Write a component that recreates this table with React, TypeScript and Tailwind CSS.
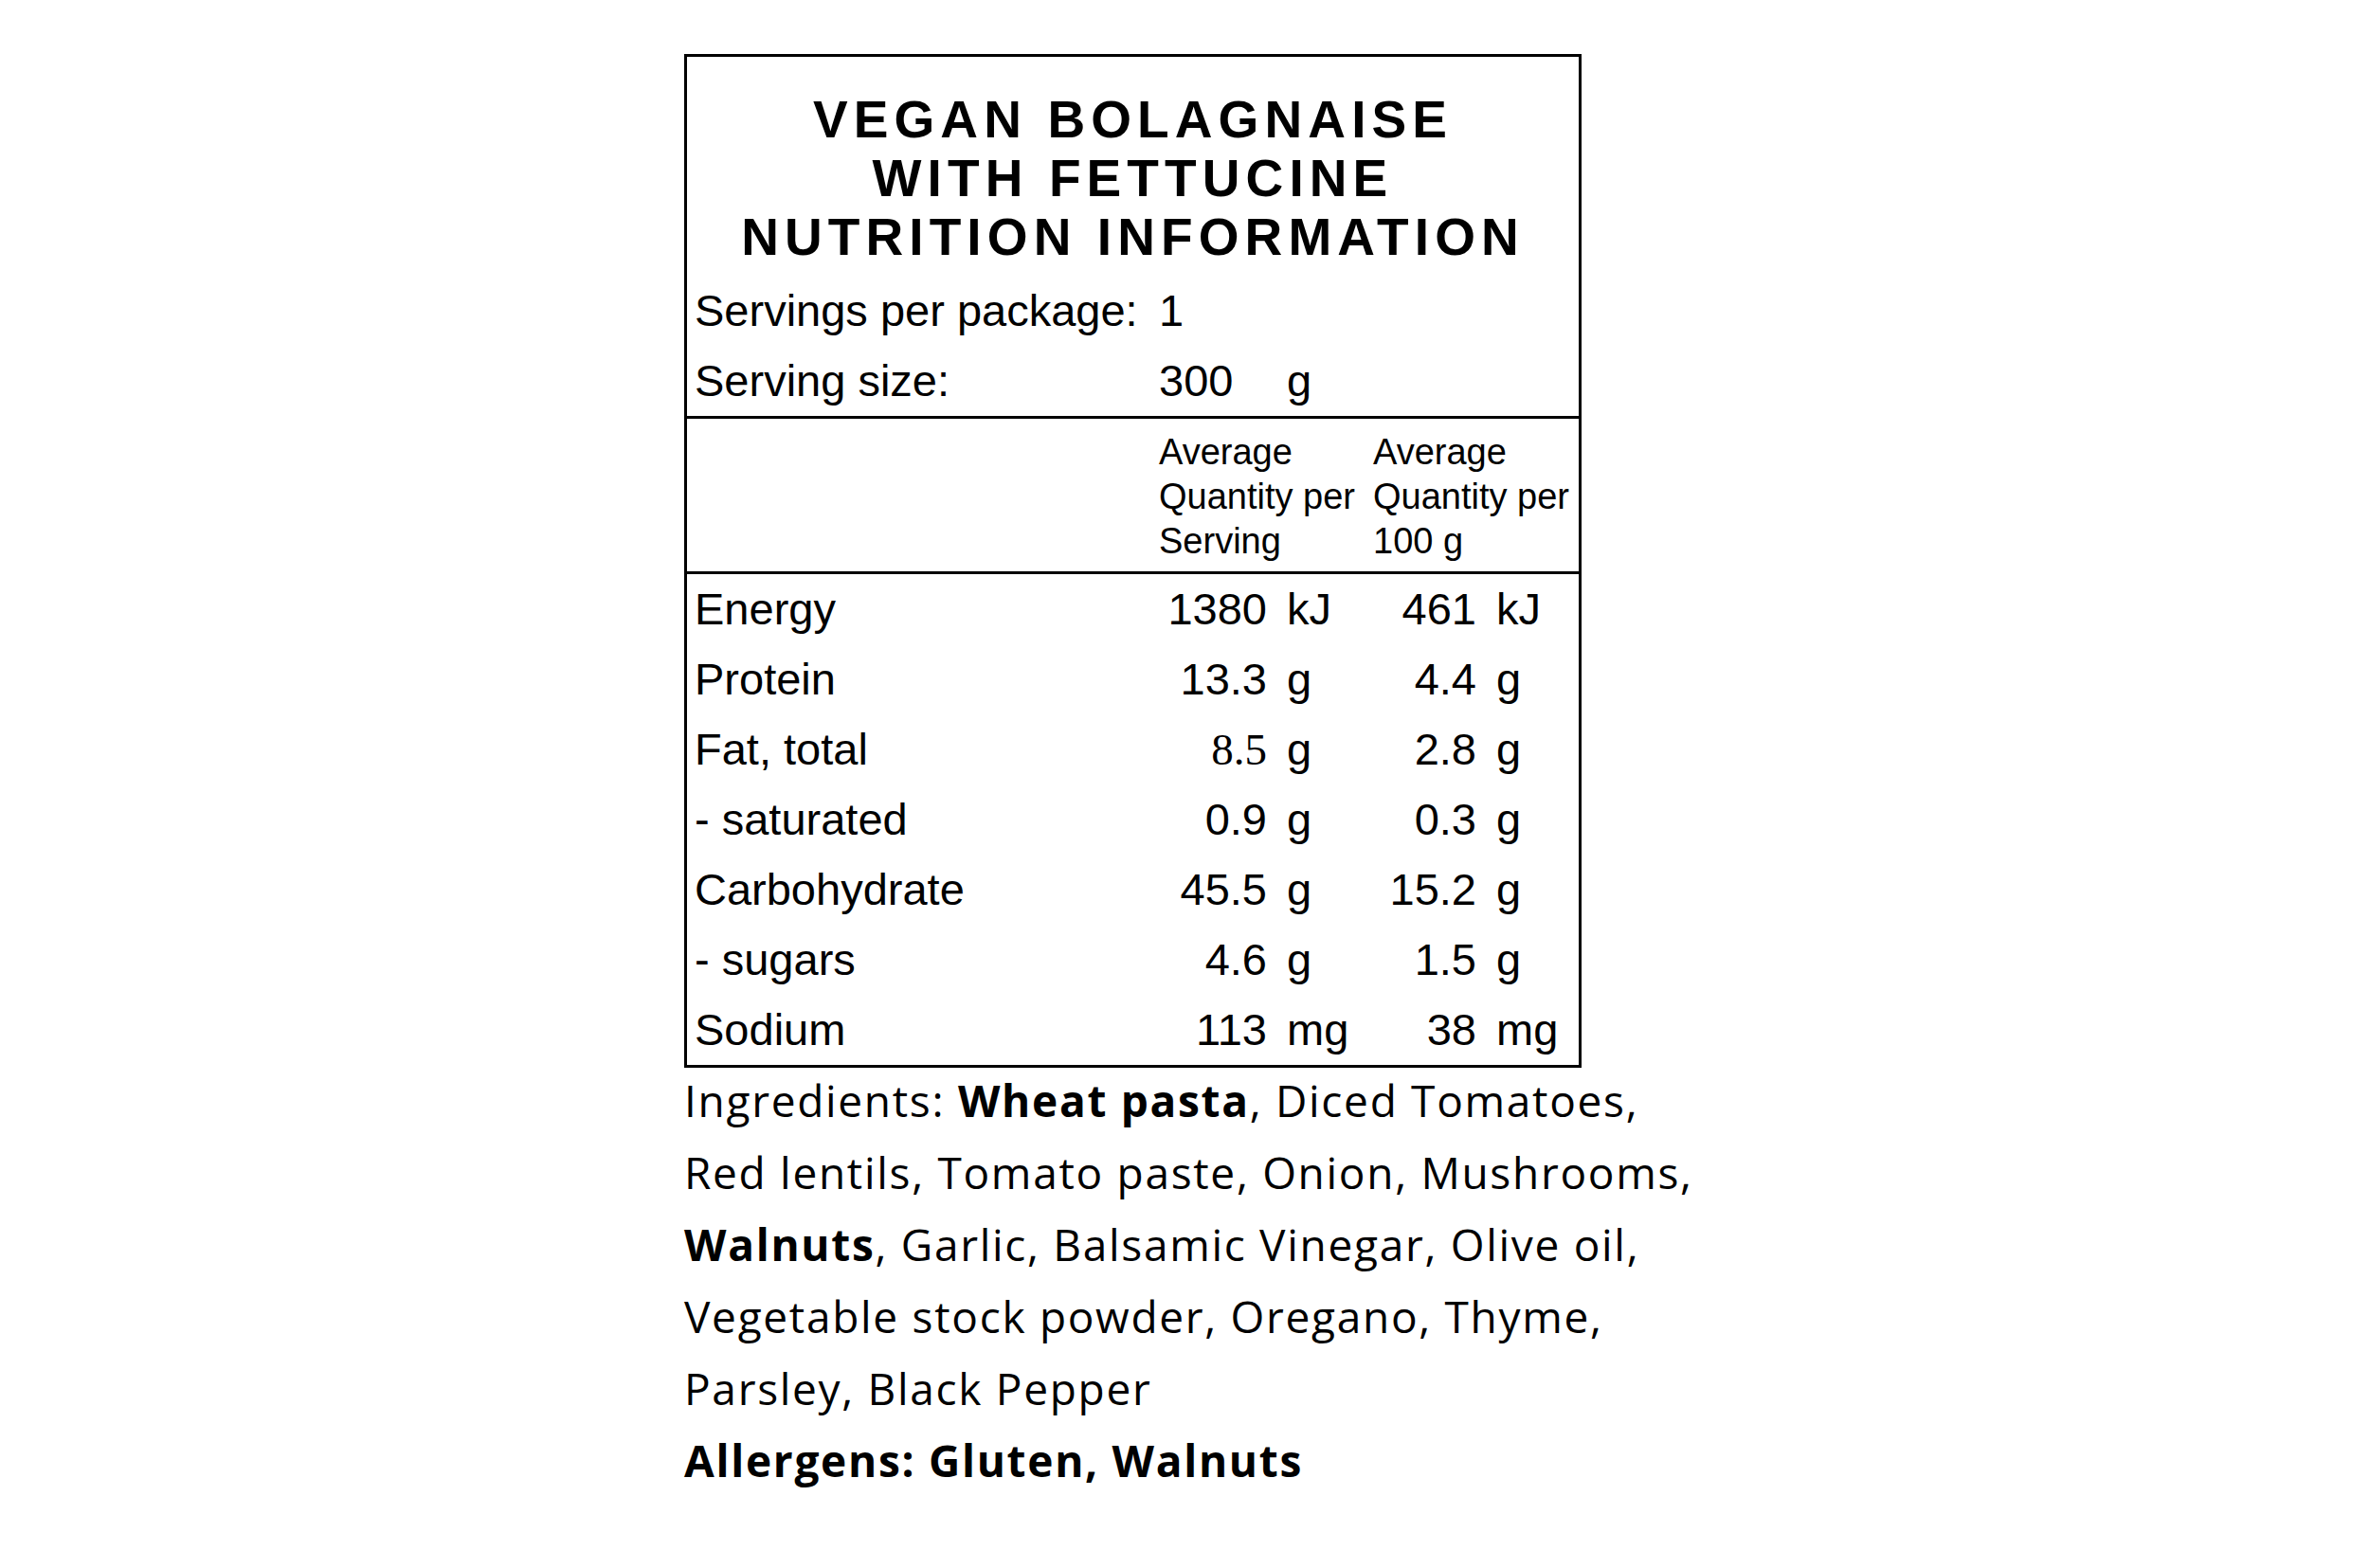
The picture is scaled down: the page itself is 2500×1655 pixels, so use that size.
import React from 'react';

type Row = {
  label: string;
  a: string;
  au: string;
  b: string;
  bu: string;
  serif?: boolean;
};

const rows: Row[] = [
  { label: 'Energy', a: '1380', au: 'kJ', b: '461', bu: 'kJ' },
  { label: 'Protein', a: '13.3', au: 'g', b: '4.4', bu: 'g' },
  { label: 'Fat, total', a: '8.5', au: 'g', b: '2.8', bu: 'g', serif: true },
  { label: '- saturated', a: '0.9', au: 'g', b: '0.3', bu: 'g' },
  { label: 'Carbohydrate', a: '45.5', au: 'g', b: '15.2', bu: 'g' },
  { label: '- sugars', a: '4.6', au: 'g', b: '1.5', bu: 'g' },
  { label: 'Sodium', a: '113', au: 'mg', b: '38', bu: 'mg' },
];

const grid = 'grid grid-cols-[498px_114px_112px_109px_108px]';

export default function App() {
  return (
    <div className="min-h-screen w-full bg-white pt-[57px] pl-[722px] text-black">
      {/* Nutrition panel */}
      <div className="w-[947px] border-[3px] border-black font-['Liberation_Sans',Arial,sans-serif]">
        <div className="pt-[35px] text-center text-[55px] font-bold leading-[62px] tracking-[6.1px]">
          <div>VEGAN BOLAGNAISE</div>
          <div>WITH FETTUCINE</div>
          <div>NUTRITION INFORMATION</div>
        </div>

        <div className="mt-[10px] border-b-[3px] border-black text-[47px]">
          <div className={`${grid} h-[74px] items-center`}>
            <div className="pl-[8px]">Servings per package:</div>
            <div>1</div>
          </div>
          <div className={`${grid} h-[74px] items-center`}>
            <div className="pl-[8px]">Serving size:</div>
            <div>300</div>
            <div className="pl-[21px]">g</div>
          </div>
        </div>

        <div className={`${grid} border-b-[3px] border-black pt-[12px] pb-[8px] text-[38px] leading-[47px]`}>
          <div />
          <div className="col-span-2">
            Average
            <br />
            Quantity per
            <br />
            Serving
          </div>
          <div className="col-span-2 whitespace-nowrap">
            Average
            <br />
            Quantity per
            <br />
            100 g
          </div>
        </div>

        <div className="text-[47px]">
          {rows.map((r) => (
            <div key={r.label} className={`${grid} h-[74px] items-center`}>
              <div className="pl-[8px]">{r.label}</div>
              <div className={`text-right ${r.serif ? "font-['Liberation_Serif',serif]" : ''}`}>{r.a}</div>
              <div className="pl-[21px]">{r.au}</div>
              <div className="text-right">{r.b}</div>
              <div className="pl-[21px]">{r.bu}</div>
            </div>
          ))}
        </div>
      </div>

      {/* Ingredients */}
      <div className="-mt-[4px] whitespace-nowrap font-['Open_Sans',sans-serif] text-[46px] leading-[76px] tracking-[1.7px]">
        <p>
          Ingredients: <span className="font-bold">Wheat pasta</span>, Diced Tomatoes,
          <br />
          Red lentils, Tomato paste, Onion, Mushrooms,
          <br />
          <span className="font-bold">Walnuts</span>, Garlic, Balsamic Vinegar, Olive oil,
          <br />
          Vegetable stock powder, Oregano, Thyme,
          <br />
          Parsley, Black Pepper
        </p>
        <p className="font-bold">Allergens: Gluten, Walnuts</p>
      </div>
    </div>
  );
}
